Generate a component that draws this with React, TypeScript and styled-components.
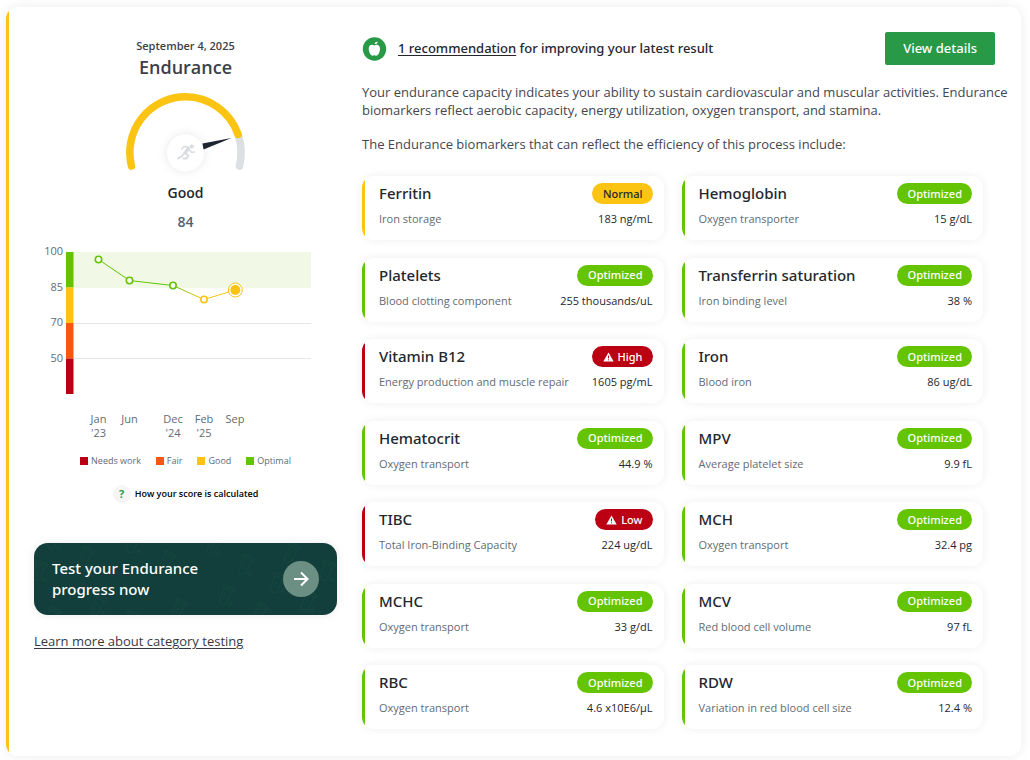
import React from "react";
import styled, { createGlobalStyle, css } from "styled-components";

const c = {
  green: "#64c400",
  yellow: "#fbc413",
  orange: "#f95616",
  red: "#ba0012",
  ink: "#23272f",
  muted: "#626b75",
  brand: "#289a47",
};

const medium = css`
  font-family: "Noto Sans", "Open Sans", sans-serif;
  font-weight: 500;
`;

const GlobalStyle = createGlobalStyle`
  *, *::before, *::after { box-sizing: border-box; }
  body {
    margin: 0;
    background: #fff;
    color: ${c.ink};
    font-family: "Open Sans", "Noto Sans", sans-serif;
  }
  button { font-family: inherit; }
  h1, h2, p, ul { margin: 0; padding: 0; }
  ul { list-style: none; }
`;

const Page = styled.div`
  display: flex;
  min-height: 100vh;
  padding: 7px 9px 4px 6px;
`;

const Panel = styled.main`
  flex: 1;
  display: grid;
  grid-template-columns: 303px minmax(0, 1fr);
  column-gap: 25px;
  padding: 25px 26px 27px 28px;
  border-radius: 12px;
  background: linear-gradient(to right, ${c.yellow} 3px, #fff 3px);
  box-shadow: 0 0 12px rgba(0, 0, 0, 0.08);
`;

const Summary = styled.section`
  display: flex;
  flex-direction: column;
  align-items: center;
`;

const TestDate = styled.p`
  margin-top: 6px;
  font-size: 11px;
  font-weight: 600;
  line-height: 16px;
  color: #3d3f49;
`;

const Category = styled.h1`
  font-size: 18px;
  font-weight: 600;
  line-height: 26px;
  color: #3d3f49;
`;

const Grade = styled.p`
  font-size: 14px;
  font-weight: 600;
  line-height: 20px;
`;

const Score = styled.p`
  margin-top: 9px;
  font-size: 14px;
  font-weight: 600;
  line-height: 20px;
  color: #56606a;
`;

const GaugeSvg = styled.svg`
  display: block;
  margin: 6px 0 4px;
  overflow: visible;
`;

const ChartSvg = styled.svg`
  display: block;
  align-self: flex-start;
  margin-top: 12px;
  overflow: visible;
  font-size: 11px;
  fill: ${c.muted};
`;

const Legend = styled.ul`
  display: flex;
  gap: 15px;
  margin-top: 10px;
  font-size: 9px;
  line-height: 14px;
  color: ${c.muted};
`;

const LegendItem = styled.li<{ $color: string }>`
  display: flex;
  align-items: center;
  gap: 3px;
  &::before {
    content: "";
    width: 8px;
    height: 8px;
    background: ${(p) => p.$color};
  }
`;

const HelpButton = styled.button`
  display: flex;
  align-items: center;
  gap: 4px;
  margin-top: 17px;
  padding: 0;
  border: 0;
  background: none;
  font-size: 9px;
  font-weight: 600;
  line-height: 18px;
  color: #000;
`;

const HelpMark = styled.span`
  width: 18px;
  height: 18px;
  border-radius: 50%;
  background: #f5f5f5;
  font-size: 11px;
  font-weight: 700;
  text-align: center;
  color: ${c.brand};
`;

const Banner = styled.a`
  ${medium}
  position: relative;
  display: flex;
  align-items: center;
  justify-content: space-between;
  align-self: stretch;
  min-height: 72px;
  margin-top: 40px;
  padding: 10px 18px;
  overflow: hidden;
  border-radius: 14px;
  background: #123f3b;
  box-shadow: 0 0 10px rgba(0, 0, 0, 0.08);
  color: #fff;
  font-size: 15px;
  line-height: 21px;
  text-decoration: none;
`;

const BannerPattern = styled.svg`
  position: absolute;
  inset: 0;
  width: 100%;
  height: 100%;
`;

const BannerText = styled.span`
  position: relative;
  max-width: 160px;
`;

const BannerArrow = styled.span`
  position: relative;
  display: grid;
  place-items: center;
  width: 36px;
  height: 36px;
  border-radius: 50%;
  background: #6b8f82;
`;

const LearnLink = styled.a`
  align-self: flex-start;
  margin-top: 17px;
  font-size: 13px;
  line-height: 18px;
  color: #363944;
  text-underline-offset: 2px;
`;

const Details = styled.section`
  display: flex;
  flex-direction: column;
`;

const Header = styled.header`
  display: flex;
  align-items: center;
  gap: 11px;
`;

const Advice = styled.p`
  ${medium}
  flex: 1;
  padding-bottom: 2px;
  font-size: 13px;
  line-height: 18px;
  a {
    color: inherit;
    text-underline-offset: 2px;
  }
`;

const ViewButton = styled.button`
  ${medium}
  height: 33px;
  padding: 0 18px 2px;
  border: 0;
  border-radius: 2px;
  background: ${c.brand};
  font-size: 13px;
  line-height: 18px;
  color: #fff;
`;

const Intro = styled.div`
  display: grid;
  gap: 16px;
  margin: 18px -16px 0 0;
  font-size: 13px;
  line-height: 18px;
  color: #44464f;
`;

const Markers = styled.ul`
  flex: 1;
  display: grid;
  grid-template-columns: repeat(2, minmax(0, 1fr));
  align-content: space-between;
  gap: 16px 18px;
  margin: 23px 12px 0 0;
`;

const Card = styled.li<{ $color: string }>`
  display: grid;
  gap: 7px;
  padding: 7px 11px 13px 17px;
  border-radius: 12px;
  background: linear-gradient(to right, ${(p) => p.$color} 3px, #fff 3px);
  box-shadow: 0 0 10px rgba(0, 0, 0, 0.07);
`;

const CardRow = styled.div`
  display: flex;
  align-items: center;
  justify-content: space-between;
  font-size: 11px;
  line-height: 16px;
  white-space: nowrap;
`;

const MarkerName = styled.h2`
  ${medium}
  font-size: 15px;
  line-height: 21px;
`;

const MarkerRole = styled.span`
  color: ${c.muted};
`;

const Pill = styled.span<{ $color: string; $dark: boolean }>`
  ${medium}
  display: flex;
  align-items: center;
  gap: 4px;
  height: 21px;
  padding: 0 10px 0 11px;
  border-radius: 11px;
  background: ${(p) => p.$color};
  color: ${(p) => (p.$dark ? c.ink : "#fff")};
  font-size: 11px;
`;

function Gauge() {
  return (
    <GaugeSvg width="120" height="93" viewBox="0 0 120 93" role="img" aria-label="Score 84 of 100">
      <defs>
        <filter id="hub" x="-50%" y="-50%" width="200%" height="200%">
          <feDropShadow dx="0" dy="0" stdDeviation="5" floodOpacity="0.1" />
        </filter>
      </defs>
      <g fill="none" strokeWidth="7.5" strokeLinecap="round">
        <path d="M112.100 48.500A55.700 55.700 0 0 1 113.500 80" stroke="#dce0e4" />
        <path d="M5.500 80A55.700 55.700 0 0 1 59.500 10.800A55.700 55.700 0 0 1 112.100 48.500" stroke={c.yellow} />
      </g>
      <circle cx="59.500" cy="67" r="18.500" fill="#fff" filter="url(#hub)" />
      <path d="M76.500 57.500L105.500 52L77.500 63.500Z" fill="#1f2530" />
      <g transform="translate(51 58)" stroke="#d8dce0" fill="none" strokeLinecap="round" strokeLinejoin="round">
        <circle cx="14.800" cy="2.400" r="2" fill="#d8dce0" stroke="none" />
        <path d="M11.500 4.500L8 9" strokeWidth="3.200" />
        <path d="M11 3L7 2.500L4.800 5M12.500 6L14.500 8.200L17.500 8" strokeWidth="1.400" />
        <path d="M7 9.500L5 12L1 14.500M8.500 9.500L11.500 11.500L9.500 14.500H6.500" strokeWidth="1.800" />
      </g>
    </GaugeSvg>
  );
}

const points = [
  { x: 64.5, y: 15.5, month: "Jan", year: "'23", color: c.green },
  { x: 95.5, y: 36.5, month: "Jun", year: "", color: c.green },
  { x: 139, y: 41.5, month: "Dec", year: "'24", color: c.green },
  { x: 170, y: 55.5, month: "Feb", year: "'25", color: c.yellow },
];

const bands = [
  { label: 100, y: 8, color: c.green },
  { label: 85, y: 43.5, color: c.yellow },
  { label: 70, y: 79, color: c.orange },
  { label: 50, y: 114.5, color: c.red },
];

function Chart() {
  return (
    <ChartSvg width="277" height="200" viewBox="0 0 277 200" role="img" aria-label="Endurance score history">
      <defs>
        <linearGradient id="drop">
          <stop offset="0" stopColor={c.green} />
          <stop offset="1" stopColor={c.yellow} />
        </linearGradient>
      </defs>
      <rect x="32" y="8" width="245" height="36" fill="#f1f9e6" />
      <path d="M40 79.500H277M40 114.500H277" stroke="#e6e6e8" />
      {bands.map((b) => (
        <g key={b.label}>
          <rect x="32" y={b.y} width="7.500" height="35.500" fill={b.color} />
          <text x="29" y={b.y + 3} textAnchor="end">{b.label}</text>
        </g>
      ))}
      <path d="M64.500 15.500L95.500 36.500L139 41.500" fill="none" stroke={c.green} />
      <path d="M139 41.500L170 55.500" stroke="url(#drop)" />
      <path d="M170 55.500L201.300 46" stroke={c.yellow} />
      {points.map((p) => (
        <g key={p.month}>
          <circle cx={p.x} cy={p.y} r="3.200" fill="#fff" stroke={p.color} strokeWidth="1.600" />
          <text x={p.x} y="179" textAnchor="middle">{p.month}</text>
          <text x={p.x} y="193" textAnchor="middle">{p.year}</text>
        </g>
      ))}
      <circle cx="201.300" cy="46" r="7" fill="#fff" stroke={c.yellow} />
      <circle cx="201.300" cy="46" r="5" fill={c.yellow} />
      <text x="201" y="179" textAnchor="middle">Sep</text>
    </ChartSvg>
  );
}

const tubes = [
  [4, 18, 20], [52, 4, 28], [98, -10, 20], [133, 8, 28], [180, -8, 25], [212, 12, 28],
  [258, 0, 28], [292, 18, 20], [64, 52, 25], [145, 56, 28], [192, 42, 25], [226, 60, 28],
  [242, 30, 20], [274, 48, 25], [18, 64, 28], [96, 68, 25], [20, -14, 25],
];

function TubePattern() {
  return (
    <BannerPattern aria-hidden="true">
      <g fill="none" stroke="#16443f" strokeWidth="1.500">
        {tubes.map(([x, y, r], i) => (
          <g key={i} transform={`translate(${x} ${y}) rotate(${r})`}>
            <rect x="-2" y="0" width="12" height="3" rx="1" />
            <path d="M0 3V15A4 4 0 0 0 8 15V3M2 9H5M2 13H5M12 12V18M9 15H15" />
          </g>
        ))}
      </g>
    </BannerPattern>
  );
}

function AppleBadge() {
  return (
    <svg width="25" height="24" viewBox="0 0 25 24" aria-hidden="true">
      <circle cx="12.500" cy="12" r="11.700" fill={c.brand} />
      <path
        d="M12.300 8.600C10.300 6.900 6.700 7.600 6.700 11.800C6.700 15 8.700 18.800 10.700 18.800C11.500 18.800 11.700 18.300 12.400 18.300C13.100 18.300 13.300 18.800 14.100 18.800C16.200 18.800 18 15 18 11.800C18 7.600 14.300 6.900 12.300 8.600Z"
        fill="#fff"
      />
      <path d="M12.500 7C12.500 5.600 13.700 4.600 15.600 4.700C15.700 6.200 14.300 7.200 12.500 7Z" fill="#fff" />
    </svg>
  );
}

function Warning() {
  return (
    <svg width="11" height="10" viewBox="0 0 11 10" aria-hidden="true">
      <path d="M5.500 0.500L10.700 9.500H0.300Z" fill="#fff" />
      <path d="M5.500 3.600V6.300M5.500 7.300V8.300" stroke={c.red} />
    </svg>
  );
}

type Status = "Normal" | "Optimized" | "High" | "Low";

const statusColor: Record<Status, string> = {
  Normal: c.yellow,
  Optimized: c.green,
  High: c.red,
  Low: c.red,
};

const markers: [string, string, Status, string][] = [
  ["Ferritin", "Iron storage", "Normal", "183 ng/mL"],
  ["Hemoglobin", "Oxygen transporter", "Optimized", "15 g/dL"],
  ["Platelets", "Blood clotting component", "Optimized", "255 thousands/uL"],
  ["Transferrin saturation", "Iron binding level", "Optimized", "38 %"],
  ["Vitamin B12", "Energy production and muscle repair", "High", "1605 pg/mL"],
  ["Iron", "Blood iron", "Optimized", "86 ug/dL"],
  ["Hematocrit", "Oxygen transport", "Optimized", "44.9 %"],
  ["MPV", "Average platelet size", "Optimized", "9.9 fL"],
  ["TIBC", "Total Iron-Binding Capacity", "Low", "224 ug/dL"],
  ["MCH", "Oxygen transport", "Optimized", "32.4 pg"],
  ["MCHC", "Oxygen transport", "Optimized", "33 g/dL"],
  ["MCV", "Red blood cell volume", "Optimized", "97 fL"],
  ["RBC", "Oxygen transport", "Optimized", "4.6 x10E6/µL"],
  ["RDW", "Variation in red blood cell size", "Optimized", "12.4 %"],
];

export default function App() {
  return (
    <Page>
      <GlobalStyle />
      <Panel>
        <Summary>
          <TestDate>September 4, 2025</TestDate>
          <Category>Endurance</Category>
          <Gauge />
          <Grade>Good</Grade>
          <Score>84</Score>
          <Chart />
          <Legend>
            <LegendItem $color={c.red}>Needs work</LegendItem>
            <LegendItem $color={c.orange}>Fair</LegendItem>
            <LegendItem $color={c.yellow}>Good</LegendItem>
            <LegendItem $color={c.green}>Optimal</LegendItem>
          </Legend>
          <HelpButton type="button">
            <HelpMark>?</HelpMark>
            How your score is calculated
          </HelpButton>
          <Banner href="#test">
            <TubePattern />
            <BannerText>Test your Endurance progress now</BannerText>
            <BannerArrow>
              <svg width="16" height="16" viewBox="0 0 16 16" fill="none" stroke="#fff" strokeWidth="2" aria-hidden="true">
                <path d="M1 8H14M8 1.500L14.500 8L8 14.500" />
              </svg>
            </BannerArrow>
          </Banner>
          <LearnLink href="#learn">Learn more about category testing</LearnLink>
        </Summary>
        <Details>
          <Header>
            <AppleBadge />
            <Advice>
              <a href="#recommendations">1 recommendation</a> for improving your latest result
            </Advice>
            <ViewButton type="button">View details</ViewButton>
          </Header>
          <Intro>
            <p>
              Your endurance capacity indicates your ability to sustain cardiovascular and muscular activities.
              Endurance biomarkers reflect aerobic capacity, energy utilization, oxygen transport, and stamina.
            </p>
            <p>The Endurance biomarkers that can reflect the efficiency of this process include:</p>
          </Intro>
          <Markers>
            {markers.map(([name, role, status, value]) => (
              <Card key={name} $color={statusColor[status]}>
                <CardRow>
                  <MarkerName>{name}</MarkerName>
                  <Pill $color={statusColor[status]} $dark={status === "Normal"}>
                    {statusColor[status] === c.red && <Warning />}
                    {status}
                  </Pill>
                </CardRow>
                <CardRow>
                  <MarkerRole>{role}</MarkerRole>
                  <span>{value}</span>
                </CardRow>
              </Card>
            ))}
          </Markers>
        </Details>
      </Panel>
    </Page>
  );
}
